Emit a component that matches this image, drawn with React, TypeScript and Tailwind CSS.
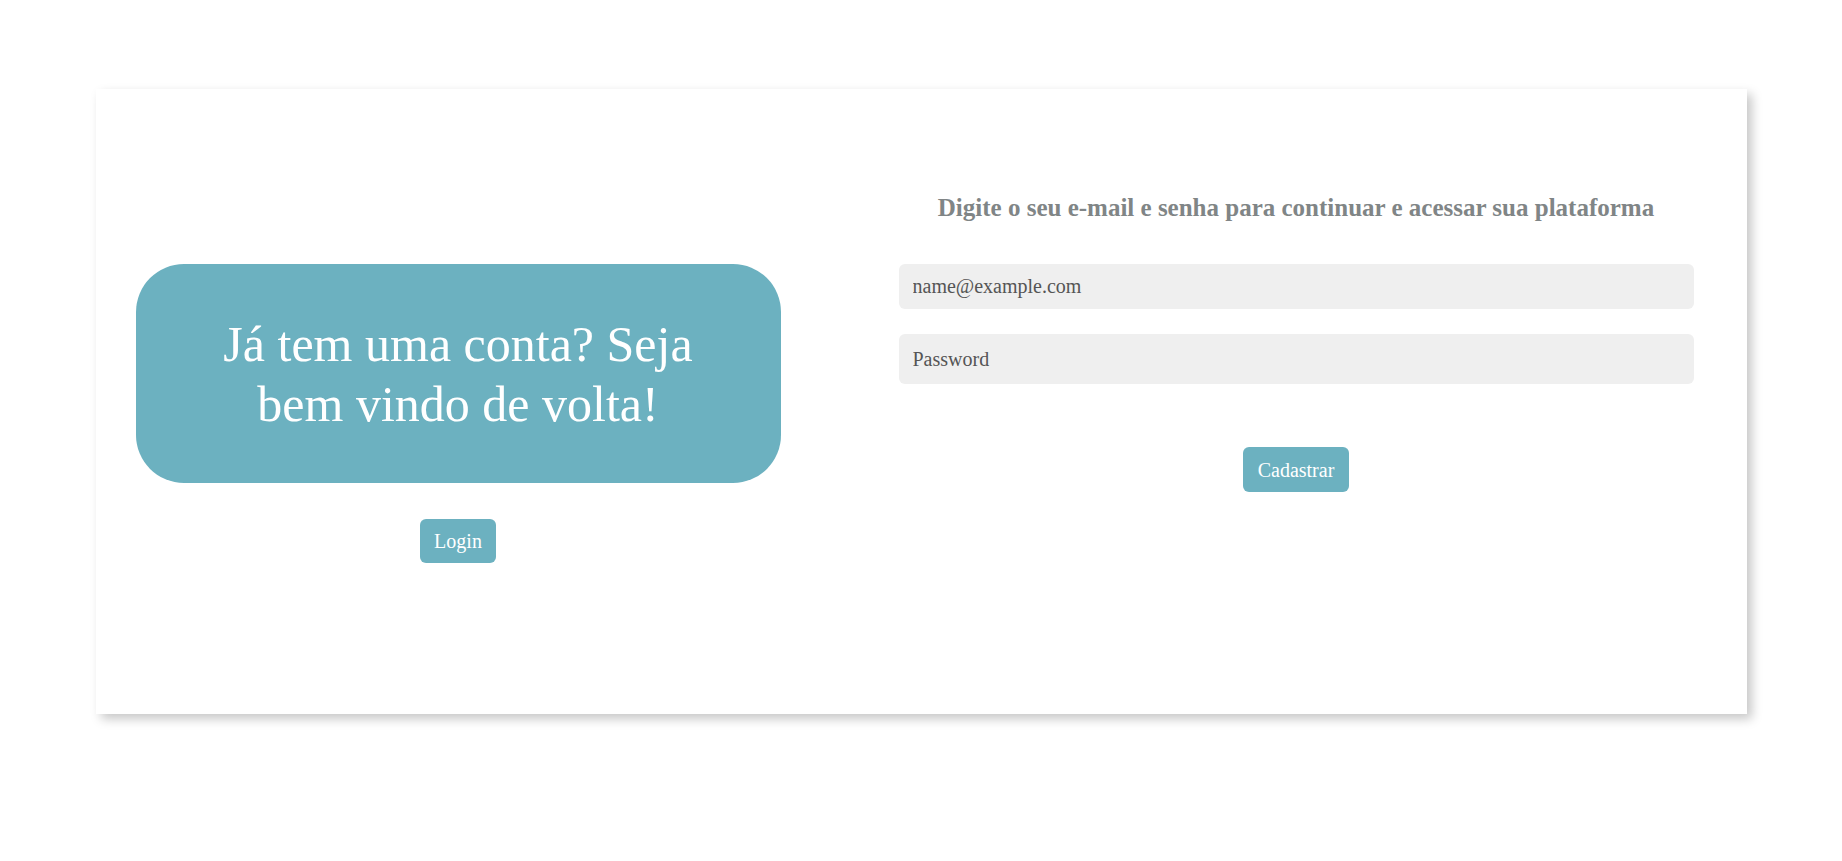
import React from "react";

export default function App() {
  return (
    <div className="min-h-[861px] w-full bg-white font-['Liberation_Serif','Times_New_Roman',serif] pt-[89px]">
      <div className="mx-auto flex h-[625px] w-[1651px] items-start bg-white shadow-[5px_5px_10px_rgba(0,0,0,0.22)]">
        <div className="ml-[40px] flex w-[645px] flex-col items-center pt-[175px]">
          <div className="flex h-[219px] w-[645px] items-center justify-center rounded-[48px] bg-[#6cb1c0] px-[50px] text-center">
            <h1 className="text-[50px] leading-[60px] text-white">Já tem uma conta? Seja bem vindo de volta!</h1>
          </div>
          <button className="mt-[36px] flex h-[44px] items-center rounded-[6px] bg-[#6cb1c0] px-[14.5px] text-[20px] leading-[30px] text-white">
            Login
          </button>
        </div>
        <div className="ml-[118px] flex w-[795px] flex-col items-center pt-[104px]">
          <h2 className="text-center text-[25px] font-bold leading-[29px] text-[#808586]">
            Digite o seu e-mail e senha para continuar e acessar sua plataforma
          </h2>
          <input
            type="email"
            placeholder="name@example.com"
            className="mt-[42px] h-[45px] w-full rounded-[6px] bg-[#efefef] px-[14px] text-[20px] text-[#555] outline-none placeholder:text-[#555]"
          />
          <input
            type="password"
            placeholder="Password"
            className="mt-[25px] h-[50px] w-full rounded-[6px] bg-[#efefef] px-[14px] text-[20px] text-[#555] outline-none placeholder:text-[#555]"
          />
          <button className="mt-[63px] flex h-[45px] items-center rounded-[6px] bg-[#6cb1c0] px-[14.5px] text-[20px] leading-[30px] text-white">
            Cadastrar
          </button>
        </div>
      </div>
    </div>
  );
}
